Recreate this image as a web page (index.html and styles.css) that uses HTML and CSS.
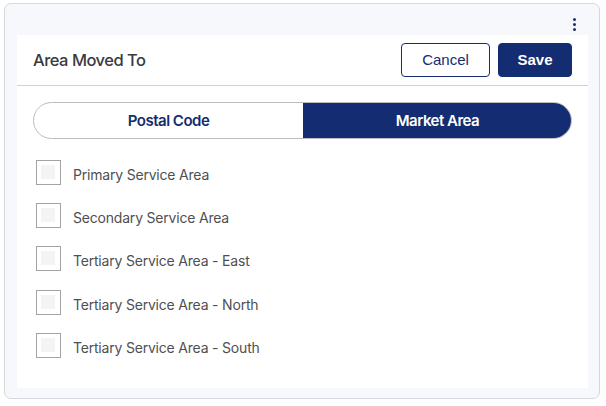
FILE: index.html
```html
<!DOCTYPE html>
<html>
<head>
<meta charset="utf-8">
<link rel="stylesheet" href="styles.css">
</head>
<body>
<div class="card">
  <div class="topbar">
    <span class="kebab"><i></i><i></i><i></i></span>
  </div>
  <div class="panel">
    <div class="header">
      <div class="title">Area Moved To</div>
      <div class="actions">
        <button class="btn btn-outline">Cancel</button>
        <button class="btn btn-primary">Save</button>
      </div>
    </div>
    <div class="body">
      <div class="toggle">
        <div class="seg">Postal Code</div>
        <div class="seg active">Market Area</div>
      </div>
      <ul class="list">
        <li class="row"><span class="box"></span><span class="label">Primary Service Area</span></li>
        <li class="row"><span class="box"></span><span class="label">Secondary Service Area</span></li>
        <li class="row"><span class="box"></span><span class="label">Tertiary Service Area - East</span></li>
        <li class="row"><span class="box"></span><span class="label">Tertiary Service Area - North</span></li>
        <li class="row"><span class="box"></span><span class="label">Tertiary Service Area - South</span></li>
      </ul>
    </div>
  </div>
</div>
</body>
</html>
```

FILE: styles.css
```css
* { box-sizing: border-box; }
html, body { margin: 0; padding: 0; background: #ffffff; }
body { font-family: Inter, "Noto Sans", sans-serif; }

.card {
  margin: 3px 0 0 4px;
  width: 596px;
  height: 396px;
  border: 1px solid #d6d7db;
  border-radius: 7px;
  background: #f7f8fc;
  padding: 0 11px 10px 12px;
  display: flex;
  flex-direction: column;
}

.topbar {
  height: 31px;
  display: flex;
  justify-content: flex-end;
  align-items: flex-start;
  padding: 14px 12px 0 0;
}
.kebab {
  display: flex;
  flex-direction: column;
  gap: 2px;
  width: 4px;
  align-items: center;
}
.kebab i {
  display: block;
  width: 3px;
  height: 3px;
  border-radius: 50%;
  background: #1b2f6e;
}

.panel {
  flex: 1;
  background: #ffffff;
  display: flex;
  flex-direction: column;
}

.header {
  height: 51px;
  border-bottom: 1px solid #d2d2d4;
  display: flex;
  align-items: center;
  justify-content: space-between;
  padding: 0 16px 0 16px;
}
.title {
  font-size: 16.5px;
  font-weight: 500;
  color: #3a3a3c;
  letter-spacing: -0.5px;
  padding-bottom: 1px;
}
.actions { display: flex; gap: 8px; padding-bottom: 1px; }
.btn {
  height: 34px;
  border-radius: 4px;
  font-family: "Liberation Sans", Arial, sans-serif;
  font-size: 15px;
  cursor: pointer;
}
.btn-outline {
  width: 89px;
  border: 1px solid #152c70;
  background: #fff;
  color: #152c70;
}
.btn-primary {
  width: 74px;
  border: 1px solid #142c71;
  background: #142c71;
  color: #fff;
  font-weight: 700;
}

.body { padding: 16px 16px 0 16px; }

.toggle {
  height: 37px;
  display: flex;
  border: 1px solid #bdbdbf;
  border-radius: 19px;
  overflow: hidden;
}
.seg {
  flex: 1;
  display: flex;
  align-items: center;
  justify-content: center;
  font-size: 15px;
  font-weight: 600;
  color: #152c70;
  letter-spacing: -0.5px;
}
.seg.active {
  background: #142c71;
  color: #ffffff;
  border-radius: 0 19px 19px 0;
  margin: -1px -1px -1px 0;
}

.list {
  list-style: none;
  margin: 21px 0 0 3px;
  padding: 0;
  display: flex;
  flex-direction: column;
  gap: 18.2px;
}
.row {
  display: flex;
  align-items: center;
  height: 25px;
  gap: 12px;
}
.box {
  width: 25px;
  height: 25px;
  border: 1px solid #a4a4a6;
  padding: 4px 5px 5px 4px;
  background: #fff;
  display: block;
}
.box::after {
  content: "";
  display: block;
  width: 100%;
  height: 100%;
  background: #f5f4f2;
}
.label {
  font-size: 14px;
  color: #4f4f52;
  letter-spacing: -0.2px;
  padding-top: 4px;
}
```
